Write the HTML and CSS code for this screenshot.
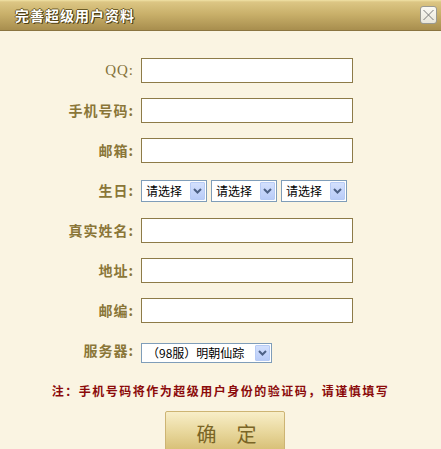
FILE: index.html
```html
<!DOCTYPE html>
<html lang="zh-CN">
<head>
<meta charset="utf-8">
<title>完善超级用户资料</title>
<link rel="stylesheet" href="styles.css">
</head>
<body>
<div class="dialog">
  <div class="titlebar">
    <span class="title">完善超级用户资料</span>
    <span class="close">
      <svg width="15" height="16" viewBox="0 0 15 16"><path d="M2.5 3 L12.5 13 M12.5 3 L2.5 13" stroke="#7a7a7a" stroke-width="1" fill="none"/></svg>
    </span>
  </div>
  <div class="form">
    <div class="row"><span class="lbl qq">QQ:</span><input class="field" type="text"></div>
    <div class="row"><span class="lbl">手机号码:</span><input class="field" type="text"></div>
    <div class="row"><span class="lbl">邮箱:</span><input class="field" type="text"></div>
    <div class="row">
      <span class="lbl">生日:</span>
      <div class="selects">
        <div class="sel small"><span class="sel-text">请选择</span><span class="arrow"><svg width="9" height="6" viewBox="0 0 9 6"><path d="M1 1 L4.5 4.5 L8 1" stroke="#4d6185" stroke-width="2" fill="none"/></svg></span></div>
        <div class="sel small"><span class="sel-text">请选择</span><span class="arrow"><svg width="9" height="6" viewBox="0 0 9 6"><path d="M1 1 L4.5 4.5 L8 1" stroke="#4d6185" stroke-width="2" fill="none"/></svg></span></div>
        <div class="sel small"><span class="sel-text">请选择</span><span class="arrow"><svg width="9" height="6" viewBox="0 0 9 6"><path d="M1 1 L4.5 4.5 L8 1" stroke="#4d6185" stroke-width="2" fill="none"/></svg></span></div>
      </div>
    </div>
    <div class="row"><span class="lbl">真实姓名:</span><input class="field" type="text"></div>
    <div class="row"><span class="lbl">地址:</span><input class="field" type="text"></div>
    <div class="row"><span class="lbl">邮编:</span><input class="field" type="text"></div>
    <div class="row server-row">
      <span class="lbl">服务器:</span>
      <div class="sel server"><span class="sel-text">（98服）明朝仙踪</span><span class="arrow"><svg width="9" height="6" viewBox="0 0 9 6"><path d="M1 1 L4.5 4.5 L8 1" stroke="#4d6185" stroke-width="2" fill="none"/></svg></span></div>
    </div>
  </div>
  <p class="note">注：手机号码将作为超级用户身份的验证码，请谨慎填写</p>
  <div class="btn"><span>确</span><span>定</span></div>
</div>
</body>
</html>
```
FILE: styles.css
```css
html, body {
  margin: 0;
  padding: 0;
  background: #faf4e2;
  overflow: hidden;
}
body {
  font-family: "Noto Sans CJK SC", "Liberation Sans", sans-serif;
}
.dialog {
  width: 441px;
  height: 449px;
  background: #faf4e2;
}
.titlebar {
  height: 30px;
  display: flex;
  align-items: center;
  justify-content: space-between;
  padding: 0 4px 0 15px;
  background: linear-gradient(to bottom, #f1e2a6 0px, #dcc684 2px, #c9b06a 14px, #a88e4e 30px);
  border-bottom: 1px solid #8a7440;
}
.title {
  color: #ffffff;
  font-size: 14px;
  font-weight: bold;
  letter-spacing: 1px;
  text-shadow: 1px 1px 0 #4e3f14, -1px 0 0 #6b5a26, 0 -1px 0 #6b5a26, 1px 0 0 #5a4a1c;
}
.close {
  width: 15px;
  height: 16px;
  border: 1px solid #9a9a92;
  border-radius: 3px;
  background: linear-gradient(to bottom, #fbfaf4, #e9e6da);
  display: flex;
  align-items: center;
  justify-content: center;
}
.close svg { display: block; }
.form {
  display: flex;
  flex-direction: column;
  padding-top: 19px;
}
.row {
  display: grid;
  grid-template-columns: 134px auto;
  column-gap: 7px;
  align-items: center;
  height: 40px;
}
.lbl {
  text-align: right;
  font-size: 14px;
  font-weight: bold;
  color: #8a7638;
  letter-spacing: 1px;
}
.lbl.qq {
  font-family: "Liberation Serif", serif;
  font-weight: normal;
  font-size: 15px;
  color: #85723a;
}
.field {
  box-sizing: border-box;
  width: 212px;
  height: 25px;
  margin: 0;
  border: 1px solid #8d7b48;
  background: #ffffff;
  padding: 0 3px;
  outline: none;
}
.selects {
  display: flex;
  gap: 4px;
  margin-top: 1px;
}
.sel {
  box-sizing: border-box;
  height: 22px;
  border: 1px solid #7f9db9;
  background: #ffffff;
  display: flex;
  align-items: center;
  justify-content: space-between;
  padding: 0 1px 0 4px;
  font-size: 12px;
  color: #000000;
}
.sel.small { width: 66px; }
.sel.server {
  width: 131px;
  height: 20px;
  padding-left: 5px;
  margin-top: 5px;
}
.sel-text { white-space: nowrap; }
.arrow {
  box-sizing: border-box;
  width: 15px;
  height: 18px;
  border: 1px solid #b7cbf5;
  border-radius: 1px;
  background: linear-gradient(to bottom, #d3e0fd, #b9ccf8);
  display: flex;
  align-items: center;
  justify-content: center;
}
.sel.server .arrow { height: 16px; }
.arrow svg { display: block; }
.note {
  margin: 12px 0 0 0;
  text-align: center;
  font-size: 12px;
  line-height: 18px;
  font-weight: bold;
  color: #8b0a0a;
  letter-spacing: 1.5px;
}
.btn {
  box-sizing: border-box;
  width: 120px;
  height: 42px;
  margin: 11px 0 0 165px;
  border: 1px solid #cdb473;
  border-radius: 2px;
  background: linear-gradient(to bottom, #f8eec8, #e8d79c 50%, #d6bd72);
  display: flex;
  justify-content: center;
  align-items: center;
  gap: 20px;
  padding: 3px 0 0 3px;
  font-size: 20px;
  color: #7a6526;
}
```
